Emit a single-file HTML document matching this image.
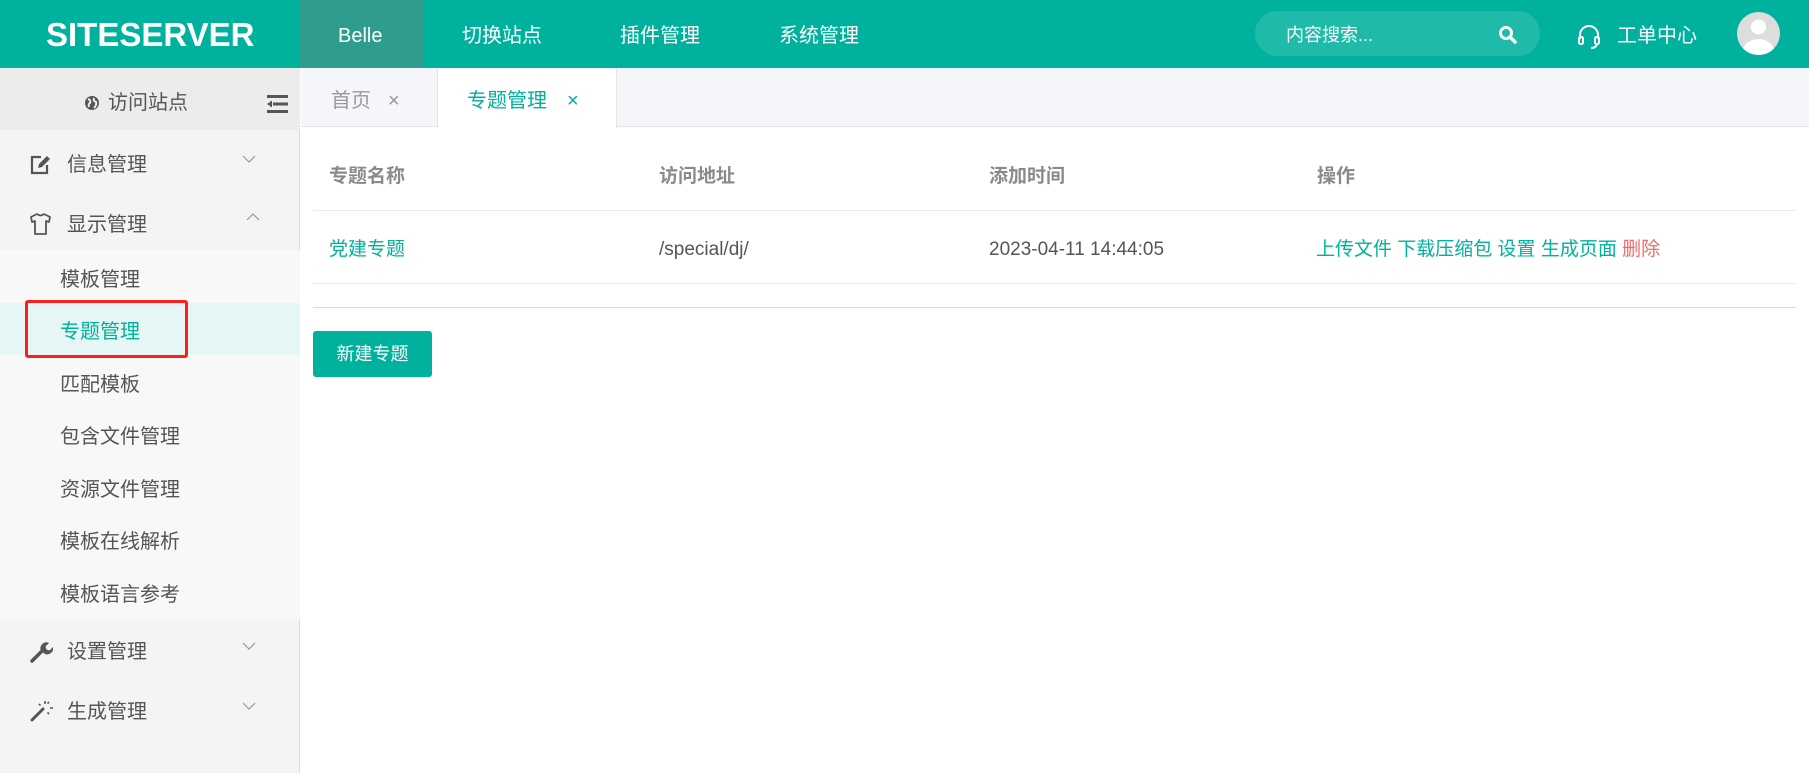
<!DOCTYPE html>
<html><head><meta charset="utf-8"><style>
*{margin:0;padding:0;box-sizing:border-box}
body{width:1809px;height:773px;overflow:hidden;background:#fff;font-family:"Liberation Sans","Noto Sans CJK SC",sans-serif;position:relative;color:#555}
.a{position:absolute;white-space:nowrap}
.hdr{left:0;top:0;width:1809px;height:68px;background:#00b19d}
.nav{top:2px;height:68px;line-height:68px;color:#fff;font-size:20px}
.side{left:0;top:68px;width:300px;height:705px;background:#f4f4f4;border-right:1px solid #dcdce4}
.mi{font-size:20px;color:#555;line-height:30px}
.sub{font-size:20px;color:#555;line-height:30px;left:60px}
.th{font-size:19px;font-weight:bold;color:#8a8a8e;line-height:30px}
.td{font-size:19px;color:#555;line-height:30px}
.g{color:#00b19d}
.hl{left:313px;width:1483px;height:1px;background:#ececf0}
</style></head><body>
<div class="a hdr"></div>
<div class="a" style="left:300px;top:0;width:123px;height:68px;background:#2f9d8e"></div>
<div class="a" style="left:46px;top:11px;font-size:33px;font-weight:bold;line-height:48px;color:#fff;font-family:'Liberation Sans',sans-serif">SITESERVER</div>
<div class="a nav" style="left:338px">Belle</div>
<div class="a nav" style="left:462px">切换站点</div>
<div class="a nav" style="left:620px">插件管理</div>
<div class="a nav" style="left:779px">系统管理</div>
<div class="a" style="left:1255px;top:11px;width:285px;height:45px;border-radius:23px;background:rgba(255,255,255,.12)"></div>
<div class="a" style="left:1286px;top:21px;font-size:18px;line-height:28px;color:#fff">内容搜索...</div>
<svg class="a" style="left:1498px;top:25px" width="20" height="20" viewBox="0 0 20 20"><circle cx="8" cy="8" r="5.5" fill="none" stroke="#fff" stroke-width="3"/><line x1="12" y1="12" x2="17" y2="17" stroke="#fff" stroke-width="3.5" stroke-linecap="round"/></svg>
<svg class="a" style="left:1577px;top:24px" width="24" height="26" viewBox="0 0 24 26"><path d="M3 15 V11 A9 9 0 0 1 21 11 V15" fill="none" stroke="#fff" stroke-width="2"/><rect x="2" y="13" width="4" height="7" rx="1.5" fill="none" stroke="#fff" stroke-width="2"/><rect x="18" y="13" width="4" height="7" rx="1.5" fill="none" stroke="#fff" stroke-width="2"/><path d="M20 20 Q19 24 14 24" fill="none" stroke="#fff" stroke-width="2"/></svg>
<div class="a" style="left:1617px;top:21px;font-size:20px;line-height:30px;color:#fff">工单中心</div>
<svg class="a" style="left:1737px;top:12px" width="43" height="43" viewBox="0 0 43 43"><defs><clipPath id="c"><circle cx="21.5" cy="21.5" r="21.5"/></clipPath></defs><circle cx="21.5" cy="21.5" r="21.5" fill="#ddd"/><g clip-path="url(#c)"><circle cx="21.5" cy="15" r="7.5" fill="#fff"/><ellipse cx="21.5" cy="40" rx="16" ry="13" fill="#fff"/></g></svg>

<div class="a side"></div>
<div class="a" style="left:0;top:68px;width:300px;height:62px;background:#ececec"></div>
<svg class="a" style="left:84px;top:95px" width="16" height="16" viewBox="0 0 16 16"><circle cx="8" cy="8" r="7" fill="#555"/><path d="M4 4 Q7 5 6 8 Q4 9 5 12 M10 3 Q9 6 12 7 Q13 10 10 13" stroke="#ececec" stroke-width="2" fill="none"/></svg>
<div class="a" style="left:108px;top:88px;font-size:20px;line-height:30px;color:#555">访问站点</div>
<svg class="a" style="left:267px;top:95px" width="21" height="18" viewBox="0 0 21 18"><rect x="0" y="0" width="21" height="3" fill="#555"/><rect x="6" y="7.5" width="15" height="3" fill="#555"/><rect x="0" y="15" width="21" height="3" fill="#555"/><path d="M0 9 L5 5.5 V12.5Z" fill="#555"/></svg>

<svg class="a" style="left:30px;top:154px" width="21" height="21" viewBox="0 0 21 21"><path d="M11 3 H2 V19 H17 V11" fill="none" stroke="#555" stroke-width="2.2"/><path d="M8 14 L9 10 L17 2 L20 5 L12 13Z" fill="#555"/></svg>
<div class="a mi" style="left:67px;top:150px">信息管理</div>
<svg class="a" style="left:242px;top:155px" width="14" height="8" viewBox="0 0 14 8"><path d="M1 1 L7 7 L13 1" fill="none" stroke="#999" stroke-width="1.2"/></svg>
<svg class="a" style="left:30px;top:213px" width="21" height="22" viewBox="0 0 21 22"><path d="M7 1 L1 4 L2 9 L5 8 V21 H16 V8 L19 9 L20 4 L14 1 Q10.5 4 7 1Z" fill="none" stroke="#555" stroke-width="1.8" stroke-linejoin="round"/></svg>
<div class="a mi" style="left:67px;top:210px">显示管理</div>
<svg class="a" style="left:246px;top:213px" width="14" height="8" viewBox="0 0 14 8"><path d="M1 7 L7 1 L13 7" fill="none" stroke="#999" stroke-width="1.2"/></svg>
<div class="a" style="left:0;top:250px;width:300px;height:369px;background:#f8f8f8"></div>
<div class="a" style="left:0;top:303px;width:300px;height:52px;background:#e6f6f4"></div>
<div class="a" style="left:25px;top:300px;width:163px;height:58px;border:3px solid #ff1d1d;border-radius:3px"></div>
<div class="a sub" style="top:265px">模板管理</div>
<div class="a sub g" style="top:317px">专题管理</div>
<div class="a sub" style="top:370px">匹配模板</div>
<div class="a sub" style="top:422px">包含文件管理</div>
<div class="a sub" style="top:475px">资源文件管理</div>
<div class="a sub" style="top:527px">模板在线解析</div>
<div class="a sub" style="top:580px">模板语言参考</div>
<svg class="a" style="left:30px;top:640px" width="23" height="23" viewBox="0 0 23 23"><path d="M2 21 L12 11" stroke="#555" stroke-width="3.5" stroke-linecap="round"/><path d="M11 11 A6 6 0 0 1 19 3 L15.5 6.5 L16.5 9.5 L19.5 10.5 L23 7 A6 6 0 0 1 15 14Z" fill="#555"/></svg>
<div class="a mi" style="left:67px;top:637px">设置管理</div>
<svg class="a" style="left:242px;top:642px" width="14" height="8" viewBox="0 0 14 8"><path d="M1 1 L7 7 L13 1" fill="none" stroke="#999" stroke-width="1.2"/></svg>
<svg class="a" style="left:30px;top:699px" width="23" height="23" viewBox="0 0 23 23"><path d="M2 21 L13 10" stroke="#555" stroke-width="3" stroke-linecap="round"/><path d="M15 2v3M20 9h3M9 5l1.5 1.5M19 3l-1.5 1.5M19 15l-1.5-1.5" stroke="#555" stroke-width="1.6"/></svg>
<div class="a mi" style="left:67px;top:697px">生成管理</div>
<svg class="a" style="left:242px;top:702px" width="14" height="8" viewBox="0 0 14 8"><path d="M1 1 L7 7 L13 1" fill="none" stroke="#999" stroke-width="1.2"/></svg>

<div class="a" style="left:301px;top:68px;width:1508px;height:59px;background:#f5f6fa;border-bottom:1px solid #e4e4ea"></div>
<div class="a" style="left:437px;top:68px;width:180px;height:60px;background:#fff;border-left:1px solid #e4e4ea;border-right:1px solid #e4e4ea"></div>
<div class="a" style="left:331px;top:86px;font-size:20px;line-height:30px;color:#999">首页</div>
<div class="a" style="left:388px;top:86px;font-size:20px;line-height:30px;color:#999">×</div>
<div class="a" style="left:467px;top:86px;font-size:20px;line-height:30px;color:#00b19d">专题管理</div>
<div class="a" style="left:567px;top:86px;font-size:20px;line-height:30px;color:#00b19d">×</div>

<div class="a th" style="left:329px;top:162px">专题名称</div>
<div class="a th" style="left:659px;top:162px">访问地址</div>
<div class="a th" style="left:989px;top:162px">添加时间</div>
<div class="a th" style="left:1317px;top:162px">操作</div>
<div class="a hl" style="top:210px"></div>
<div class="a td g" style="left:329px;top:235px">党建专题</div>
<div class="a td" style="left:659px;top:235px">/special/dj/</div>
<div class="a td" style="left:989px;top:235px">2023-04-11 14:44:05</div>
<div class="a td g" style="left:1316px;top:235px">上传文件 下载压缩包 设置 生成页面 <span style="color:#f06a6a">删除</span></div>
<div class="a hl" style="top:283px"></div>
<div class="a hl" style="top:307px;background:#dcdce0"></div>
<div class="a" style="left:313px;top:331px;width:119px;height:46px;background:#00b19d;border-radius:3px;color:#fff;font-size:18px;line-height:47px;text-align:center">新建专题</div>
</body></html>
